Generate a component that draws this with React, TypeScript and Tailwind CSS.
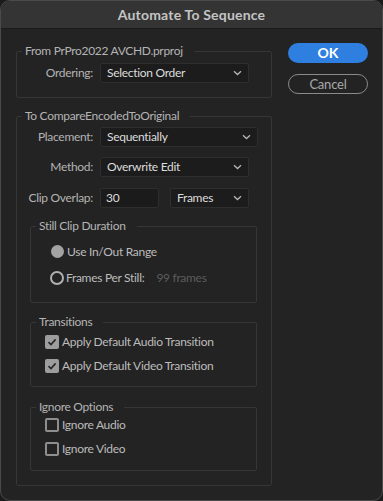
import type { ReactNode } from 'react'

const FONT = { fontFamily: 'Lato, "Open Sans", Arial, sans-serif' }
const TXT = 'text-[12px] tracking-[-0.3px] leading-none'

function Chevron() {
  return (
    <svg width="9" height="6" viewBox="0 0 9 6" className="shrink-0">
      <path d="M1 1.2 L4.5 4.5 L8 1.2" fill="none" stroke="#b5b5b5" strokeWidth="1.3" />
    </svg>
  )
}

function Dropdown({ value, width }: { value: string; width: string }) {
  return (
    <div className={`${width} h-[20px] flex items-center justify-between pl-[6px] pr-[6px] bg-[#1c1c1c] border border-[#2e2e2e] rounded-[2px]`}>
      <span className={`${TXT} text-[#dcdcdc]`}>{value}</span>
      <Chevron />
    </div>
  )
}

function Row({ label, children, mt }: { label: string; children: ReactNode; mt: string }) {
  return (
    <div className={`flex items-center ${mt}`}>
      <div className={`w-[76px] text-right ${TXT} text-[#b4b4b4]`}>{label}</div>
      <div className="ml-[7px] flex items-center">{children}</div>
    </div>
  )
}

function Group({ title, className, children }: { title: string; className: string; children: ReactNode }) {
  return (
    <fieldset className={`border border-[#363636] rounded-[2px] ${className}`}>
      <legend className="ml-[5px] pl-[3px] pr-[11px] text-[12px] tracking-[-0.3px] leading-[16px] text-[#b4b4b4]">{title}</legend>
      {children}
    </fieldset>
  )
}

function Check({ label, checked, mt }: { label: string; checked: boolean; mt: string }) {
  return (
    <div className={`flex items-center ml-[14px] ${mt}`}>
      {checked ? (
        <div className="w-[14px] h-[14px] rounded-[2px] bg-[#9d9d9d] flex items-center justify-center">
          <svg width="10" height="10" viewBox="0 0 10 10">
            <path d="M1.5 5.2 L4 7.6 L8.6 2.4" fill="none" stroke="#262626" strokeWidth="1.6" />
          </svg>
        </div>
      ) : (
        <div className="w-[14px] h-[14px] rounded-[2px] border-2 border-[#8e8e8e]" />
      )}
      <span className={`ml-[3px] ${TXT} text-[#bcbcbc]`}>{label}</span>
    </div>
  )
}

export default function App() {
  return (
    <div className="w-[383px] h-[501px] bg-[#1b1b1b]" style={FONT}>
      <div className="w-full h-full rounded-[10px] border border-[#4a4a4a] bg-[#232323] overflow-hidden flex flex-col">
        <div className="h-[28px] shrink-0 flex items-center justify-center bg-[#343434] border-b border-[#1a1a1a]">
          <span className="text-[14px] font-bold text-[#c4c4c4] tracking-[0.2px]">Automate To Sequence</span>
        </div>

        <div className="flex pl-[15px] pt-[14px]">
          <div className="w-[256px]">
            <Group title="From PrPro2022 AVCHD.prproj" className="pb-[14px]">
              <Row label="Ordering:" mt="mt-[4px]">
                <Dropdown value="Selection Order" width="w-[149px]" />
              </Row>
            </Group>

            <Group title="To CompareEncodedToOriginal" className="mt-[10px] pb-[14px]">
              <Row label="Placement:" mt="mt-[3px]">
                <Dropdown value="Sequentially" width="w-[158px]" />
              </Row>
              <Row label="Method:" mt="mt-[10px]">
                <Dropdown value="Overwrite Edit" width="w-[149px]" />
              </Row>
              <Row label="Clip Overlap:" mt="mt-[11px]">
                <div className="w-[59px] h-[20px] flex items-center pl-[5px] bg-[#1b1b1b] border border-[#2e2e2e] rounded-[2px]">
                  <span className={`${TXT} text-[#dcdcdc]`}>30</span>
                </div>
                <div className="ml-[11px]">
                  <Dropdown value="Frames" width="w-[79px]" />
                </div>
              </Row>

              <div className="pl-[13px] pr-[14px]">
                <Group title="Still Clip Duration" className="mt-[10px] h-[85px]">
                  <div className="flex items-center ml-[20px] mt-[11px]">
                    <div className="w-[13px] h-[13px] rounded-full bg-[#a3a3a3]" />
                    <span className={`ml-[3px] ${TXT} text-[#bcbcbc]`}>Use In/Out Range</span>
                  </div>
                  <div className="flex items-center ml-[19px] mt-[13px]">
                    <div className="w-[14px] h-[14px] rounded-full border-2 border-[#b0b0b0]" />
                    <span className={`ml-[2px] ${TXT} text-[#bcbcbc]`}>Frames Per Still:</span>
                    <span className={`ml-[12px] ${TXT} text-[#5c5c5c]`}>99 frames</span>
                  </div>
                </Group>

                <Group title="Transitions" className="mt-[11px] h-[73px]">
                  <Check label="Apply Default Audio Transition" checked mt="mt-[5px]" />
                  <Check label="Apply Default Video Transition" checked mt="mt-[10px]" />
                </Group>

                <Group title="Ignore Options" className="mt-[12px] h-[72px]">
                  <Check label="Ignore Audio" checked={false} mt="mt-[3px]" />
                  <Check label="Ignore Video" checked={false} mt="mt-[10px]" />
                </Group>
              </div>
            </Group>
          </div>

          <div className="ml-[16px] w-[80px] flex flex-col">
            <div className="h-[20px] rounded-full bg-[#2f7fe0] flex items-center justify-center">
              <span className="text-[14px] font-bold text-white leading-none">OK</span>
            </div>
            <div className="mt-[11px] h-[20px] rounded-full border border-[#8a8a8a] flex items-center justify-center">
              <span className="text-[13px] tracking-[-0.2px] text-[#a8a8a8] leading-none">Cancel</span>
            </div>
          </div>
        </div>
      </div>
    </div>
  )
}
